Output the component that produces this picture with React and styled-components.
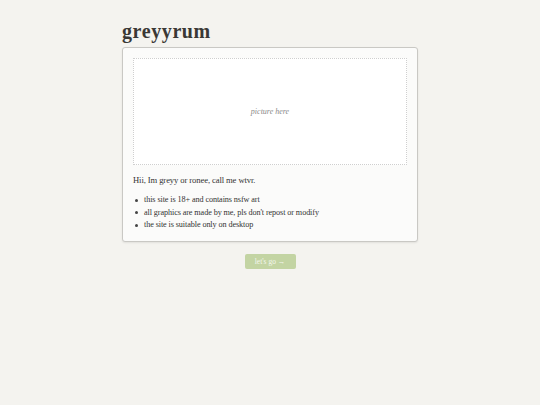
import React from 'react';
import styled, { createGlobalStyle } from 'styled-components';

const GlobalStyle = createGlobalStyle`
  html, body {
    margin: 0;
    padding: 0;
    background: #f4f3ef;
  }
  body {
    font-family: "Liberation Serif", "DejaVu Serif", serif;
    color: #333;
  }
`;

const Page = styled.div`
  width: 296px;
  margin: 0 auto;
  padding-top: 22px;
  display: flex;
  flex-direction: column;
`;

const Title = styled.h1`
  margin: 0 0 6px 0;
  font-size: 20px;
  line-height: 19px;
  font-weight: bold;
  color: #3a3835;
  letter-spacing: 0.6px;
`;

const Card = styled.div`
  background: #fbfbfa;
  border: 1px solid #c9c8c4;
  border-radius: 3px;
  box-shadow: 0 1px 2px rgba(0, 0, 0, 0.08);
  padding: 10px 10px 9px 10px;
`;

const PictureBox = styled.div`
  height: 105px;
  background: #fff;
  border: 1px dotted #cfcfcf;
  display: flex;
  align-items: center;
  justify-content: center;
  font-style: italic;
  font-size: 8px;
  color: #8a8a8a;
`;

const Intro = styled.p`
  margin: 9px 0 8px 0;
  font-size: 8.6px;
  line-height: 12px;
  letter-spacing: -0.1px;
  color: #333;
`;

const List = styled.ul`
  margin: 0;
  padding: 0;
  list-style: none;
  font-size: 8.2px;
  line-height: 12.5px;
  letter-spacing: -0.1px;
  color: #333;
`;

const Item = styled.li`
  display: flex;
  align-items: center;

  &::before {
    content: '';
    width: 3px;
    height: 3px;
    border-radius: 50%;
    background: #444;
    margin: 0 6px 0 2px;
    flex-shrink: 0;
  }
`;

const ButtonRow = styled.div`
  display: flex;
  justify-content: center;
  margin-top: 12px;
`;

const GoButton = styled.button`
  width: 51px;
  height: 15px;
  padding: 0;
  border: none;
  border-radius: 2px;
  background: #c3d4a3;
  color: #f4f7ee;
  font-family: inherit;
  font-size: 7.5px;
  cursor: pointer;
`;

export default function App() {
  return (
    <>
      <GlobalStyle />
      <Page>
        <Title>greyyrum</Title>
        <Card>
          <PictureBox>picture here</PictureBox>
          <Intro>Hii, Im greyy or ronee, call me wtvr.</Intro>
          <List>
            <Item>this site is 18+ and contains nsfw art</Item>
            <Item>all graphics are made by me, pls don't repost or modify</Item>
            <Item>the site is suitable only on desktop</Item>
          </List>
        </Card>
        <ButtonRow>
          <GoButton>let's go →</GoButton>
        </ButtonRow>
      </Page>
    </>
  );
}
